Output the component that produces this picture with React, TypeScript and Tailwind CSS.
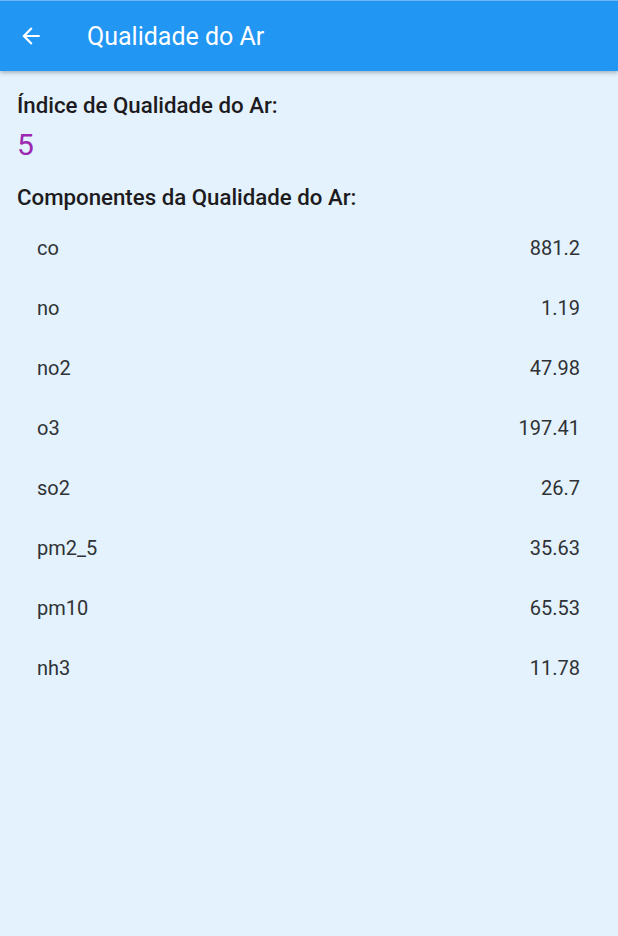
import React from "react";

const rows: [string, string][] = [
  ["co", "881.2"],
  ["no", "1.19"],
  ["no2", "47.98"],
  ["o3", "197.41"],
  ["so2", "26.7"],
  ["pm2_5", "35.63"],
  ["pm10", "65.53"],
  ["nh3", "11.78"],
];

export default function App() {
  return (
    <div
      className="w-[618px] h-[936px] bg-[#e3f2fd] flex flex-col overflow-hidden"
      style={{ fontFamily: "Roboto, 'Noto Sans', sans-serif" }}
    >
      <div className="h-[71px] bg-[#2196f3] flex items-center border-t border-[#6bb6f5] shadow-[0_2px_4px_rgba(0,0,0,0.25)] z-10 shrink-0">
        <div className="w-[62px] flex justify-center">
          <svg width="26" height="26" viewBox="0 0 24 24" fill="white">
            <path d="M20 11H7.83l5.59-5.59L12 4l-8 8 8 8 1.41-1.41L7.83 13H20v-2z" />
          </svg>
        </div>
        <div className="text-white text-[25px] ml-[25px] leading-none">Qualidade do Ar</div>
      </div>
      <div className="px-[17px] pt-[19px]">
        <div className="text-[22.25px] font-medium text-[#1d1b20] leading-[30px]">Índice de Qualidade do Ar:</div>
        <div className="text-[30px] text-[#9c27b0] leading-[36px] mt-[7px]">5</div>
        <div className="text-[22.25px] font-medium text-[#1d1b20] leading-[30px] mt-[19px]">Componentes da Qualidade do Ar:</div>
        <div className="mt-[6px] flex flex-col">
          {rows.map(([k, v]) => (
            <div key={k} className="h-[60px] flex items-center justify-between pl-[20px] pr-[21px] text-[20px] text-[#303236]">
              <span>{k}</span>
              <span>{v}</span>
            </div>
          ))}
        </div>
      </div>
    </div>
  );
}
